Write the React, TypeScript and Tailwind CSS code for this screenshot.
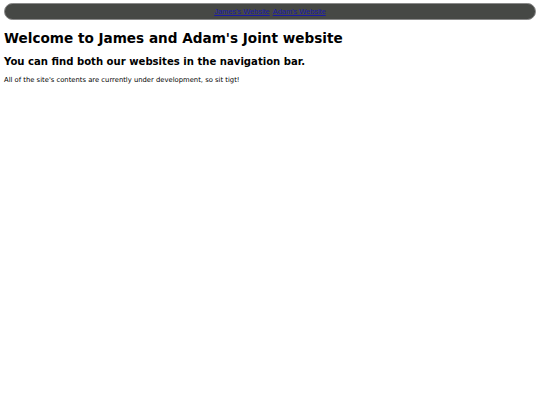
export default function App() {
    return (
        <div className="min-h-screen bg-white px-1 pt-[3px] text-black" style={{ fontFamily: '"DejaVu Sans", sans-serif' }}>
            <nav className="flex h-[17px] items-center justify-center gap-[3px] rounded-full border border-[#8a8a8a] bg-[#464845] pt-[1px]">
                <a href="#" className="text-[7.4px] text-[#1a1aa6] underline" style={{ fontFamily: '"Liberation Sans", Arial, sans-serif' }}>James's Website</a>
                <a href="#" className="text-[7.4px] text-[#1a1aa6] underline" style={{ fontFamily: '"Liberation Sans", Arial, sans-serif' }}>Adam's Website</a>
            </nav>
            <h1 className="mt-[10px] text-[13.6px] font-bold leading-[16px]">Welcome to James and Adam's Joint website</h1>
            <h2 className="mt-[10px] text-[10.1px] font-bold leading-[12px]">You can find both our websites in the navigation bar.</h2>
            <p className="mt-[8px] text-[6.8px] leading-[8px]">All of the site's contents are currently under development, so sit tigt!</p>
        </div>
    );
}
